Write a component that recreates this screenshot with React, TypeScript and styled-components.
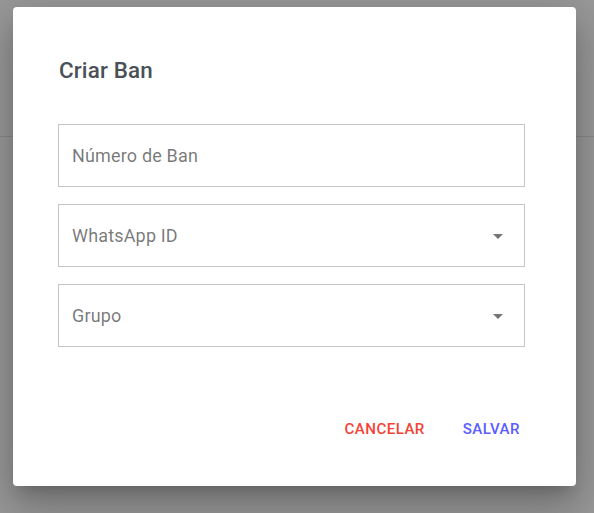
import styled, { createGlobalStyle } from 'styled-components';

const GlobalStyle = createGlobalStyle`
  html, body {
    margin: 0;
    padding: 0;
    height: 100%;
  }
  body {
    font-family: Roboto, "Liberation Sans", Arial, sans-serif;
    background: #999999;
  }
`;

const Backdrop = styled.div`
  width: 594px;
  height: 513px;
  background: #999999;
  position: relative;
  overflow: hidden;
`;

const PageLine = styled.div`
  position: absolute;
  left: 0;
  right: 0;
  top: 136px;
  height: 1px;
  background: #8a8a8a;
`;

const Dialog = styled.div`
  position: absolute;
  left: 13px;
  top: 7px;
  width: 563px;
  height: 479px;
  box-sizing: border-box;
  background: #fff;
  border-radius: 4px;
  box-shadow: 0px 11px 15px -7px rgba(0, 0, 0, 0.2),
    0px 24px 38px 3px rgba(0, 0, 0, 0.14),
    0px 9px 46px 8px rgba(0, 0, 0, 0.12);
  padding: 47px 48px 39px 45px;
  display: flex;
  flex-direction: column;
`;

const Title = styled.h2`
  margin: 0 0 38px 1px;
  font-size: 22.4px;
  font-weight: 500;
  line-height: 32px;
  color: #4a5057;
  letter-spacing: 0.0075em;
`;

const Fields = styled.div`
  display: flex;
  flex-direction: column;
  gap: 17px;
  width: 467px;
`;

const Field = styled.div`
  height: 63px;
  box-sizing: border-box;
  border: 1px solid #c4c4c4;
  display: flex;
  align-items: center;
  justify-content: space-between;
  padding: 0 14px 0 13px;
`;

const Label = styled.span`
  font-size: 18px;
  color: rgba(0, 0, 0, 0.54);
  letter-spacing: 0.00938em;
`;

const Arrow = styled.svg`
  width: 24px;
  height: 24px;
  fill: rgba(0, 0, 0, 0.54);
`;

const Actions = styled.div`
  margin-top: auto;
  display: flex;
  justify-content: flex-end;
  gap: 22px;
`;

const TextButton = styled.button<{ $color: string }>`
  border: none;
  background: transparent;
  padding: 6px 8px;
  height: 37px;
  font-family: Roboto, "Liberation Sans", Arial, sans-serif;
  font-size: 15.1px;
  font-weight: 500;
  letter-spacing: 0.02857em;
  text-transform: uppercase;
  color: ${(p) => p.$color};
  cursor: pointer;
  border-radius: 4px;
`;

function SelectArrow() {
  return (
    <Arrow viewBox="0 0 24 24">
      <path d="M7 10l5 5 5-5z" />
    </Arrow>
  );
}

export default function App() {
  return (
    <>
      <GlobalStyle />
      <Backdrop>
        <PageLine />
        <Dialog>
          <Title>Criar Ban</Title>
          <Fields>
            <Field>
              <Label>Número de Ban</Label>
            </Field>
            <Field>
              <Label>WhatsApp ID</Label>
              <SelectArrow />
            </Field>
            <Field>
              <Label>Grupo</Label>
              <SelectArrow />
            </Field>
          </Fields>
          <Actions>
            <TextButton $color="#f44336">Cancelar</TextButton>
            <TextButton $color="#5c5cff">Salvar</TextButton>
          </Actions>
        </Dialog>
      </Backdrop>
    </>
  );
}
